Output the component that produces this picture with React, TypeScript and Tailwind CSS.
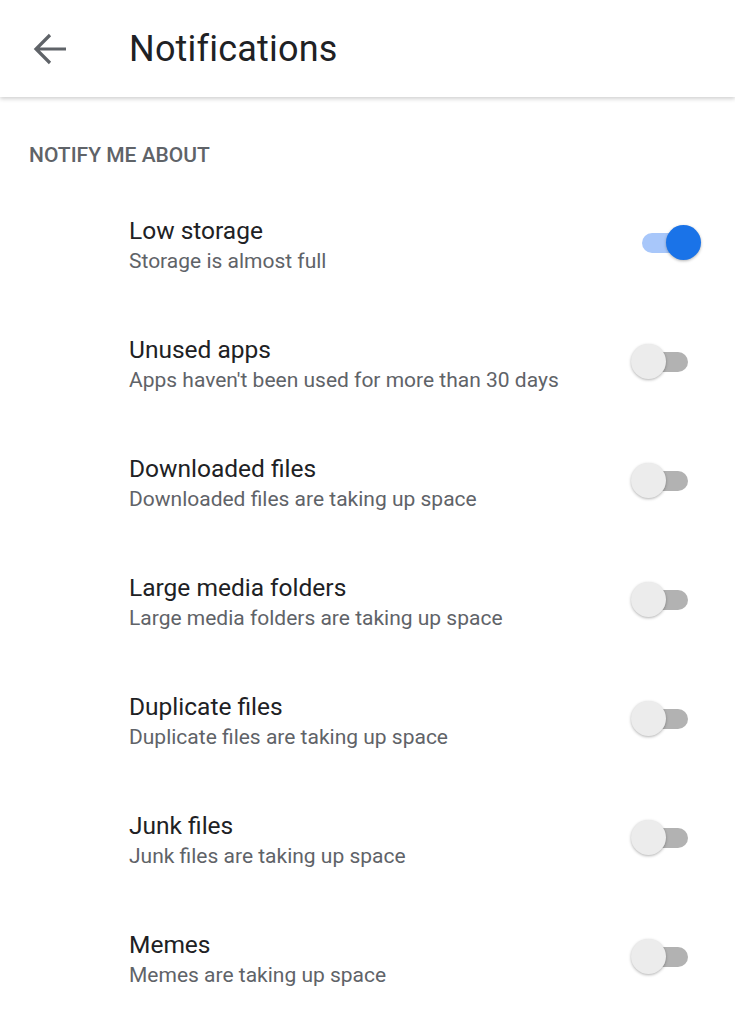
import React, { useState } from "react";

const items = [
  { title: "Low storage", desc: "Storage is almost full", on: true },
  { title: "Unused apps", desc: "Apps haven't been used for more than 30 days", on: false },
  { title: "Downloaded files", desc: "Downloaded files are taking up space", on: false },
  { title: "Large media folders", desc: "Large media folders are taking up space", on: false },
  { title: "Duplicate files", desc: "Duplicate files are taking up space", on: false },
  { title: "Junk files", desc: "Junk files are taking up space", on: false },
  { title: "Memes", desc: "Memes are taking up space", on: false },
];

const Toggle = ({ on, onClick }: { on: boolean; onClick: () => void }) => (
  <button onClick={onClick} className="relative w-[58px] h-[36px] shrink-0">
    <span
      className={`absolute left-[11px] top-[8px] w-[46px] h-[20px] rounded-full ${
        on ? "bg-[#a8c7fa]" : "bg-[#b2b2b2]"
      }`}
    />
    <span
      className={`absolute top-0 w-[35px] h-[35px] rounded-full shadow-[0_1px_3px_rgba(0,0,0,0.3)] ${
        on ? "left-[35px] bg-[#1a73e8]" : "left-0 bg-[#ececec]"
      }`}
    />
  </button>
);

export default function App() {
  const [state, setState] = useState(items.map((i) => i.on));

  return (
    <div className="w-[735px] h-[1024px] bg-white overflow-hidden font-['Roboto',sans-serif]">
      {/* Header */}
      <header className="h-[97px] flex items-center bg-white shadow-[0_2px_4px_rgba(0,0,0,0.18)] relative">
        <button className="w-[129px] h-full flex items-center pl-[33px]">
          <svg width="34" height="32" viewBox="0 0 34 32" fill="none">
            <path d="M3 16h30M17 2L3 16l14 14" stroke="#5f6368" strokeWidth="3.2" />
          </svg>
        </button>
        <h1 className="text-[36px] text-[#202124] tracking-[0.2px]">Notifications</h1>
      </header>

      {/* Section label */}
      <div className="pl-[29px] pt-[45px] text-[21px] font-medium text-[#5f6368] leading-[26px]">
        NOTIFY ME ABOUT
      </div>

      {/* List */}
      <ul className="pt-[48px]">
        {items.map((it, idx) => (
          <li key={it.title} className="h-[119px] flex items-start pl-[129px] pr-[46px]">
            <div className="flex-1">
              <div className="text-[24.5px] text-[#202124] leading-[30px]">{it.title}</div>
              <div className="text-[21px] text-[#5f6368] leading-[30px]">{it.desc}</div>
            </div>
            <div className="pt-[9px]">
              <Toggle
                on={state[idx]}
                onClick={() => setState((s) => s.map((v, i) => (i === idx ? !v : v)))}
              />
            </div>
          </li>
        ))}
      </ul>
    </div>
  );
}
